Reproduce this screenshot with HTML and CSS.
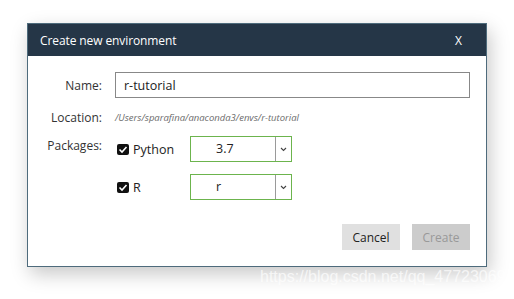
FILE: index.html
```html
<!DOCTYPE html>
<html lang="en">
<head>
    <meta charset="UTF-8">
    <title>Create new environment</title>
    <link rel="stylesheet" href="styles.css">
</head>
<body>
    <div class="dialog">
        <div class="dialog-header">
            <span class="dialog-title">Create new environment</span>
            <span class="dialog-close">X</span>
        </div>
        <form class="dialog-body">
            <div class="row row-name">
                <label class="label">Name:</label>
                <input type="text" class="text-input" value="r-tutorial">
            </div>
            <div class="row row-location">
                <span class="label">Location:</span>
                <span class="location">/Users/sparafina/anaconda3/envs/r-tutorial</span>
            </div>
            <div class="row row-package">
                <span class="label label-top">Packages:</span>
                <div class="package">
                    <span class="check">
                        <svg width="12" height="11" viewBox="0 0 12 11"><polyline points="2.5,5.5 5,8 9.5,3" fill="none" stroke="#fff" stroke-width="1.6"/></svg>
                    </span>
                    <span class="package-name">Python</span>
                    <div class="select">
                        <span class="select-value">3.7</span>
                        <span class="select-arrow">
                            <svg width="7" height="5" viewBox="0 0 7 5"><polyline points="1,1 3.5,3.5 6,1" fill="none" stroke="#444" stroke-width="1.1"/></svg>
                        </span>
                    </div>
                </div>
            </div>
            <div class="row row-package-r">
                <span class="label"></span>
                <div class="package">
                    <span class="check">
                        <svg width="12" height="11" viewBox="0 0 12 11"><polyline points="2.5,5.5 5,8 9.5,3" fill="none" stroke="#fff" stroke-width="1.6"/></svg>
                    </span>
                    <span class="package-name">R</span>
                    <div class="select">
                        <span class="select-value">r</span>
                        <span class="select-arrow">
                            <svg width="7" height="5" viewBox="0 0 7 5"><polyline points="1,1 3.5,3.5 6,1" fill="none" stroke="#444" stroke-width="1.1"/></svg>
                        </span>
                    </div>
                </div>
            </div>
            <div class="buttons">
                <button type="button" class="btn btn-cancel">Cancel</button>
                <button type="button" class="btn btn-create" disabled>Create</button>
            </div>
        </form>
    </div>
    <div class="watermark">https://blog.csdn.net/qq_47723069</div>
</body>
</html>
```

FILE: styles.css
```css
body {
    margin: 0;
    background-color: #fff;
    font-family: 'Open Sans', 'Noto Sans', sans-serif;
    color: #222;
    position: relative;
    height: 299px;
    overflow: hidden;
}

.dialog {
    box-sizing: border-box;
    width: 460px;
    height: 244px;
    margin: 23px 0 0 27px;
    border: 1px solid #4e6b7c;
    background-color: #fff;
    box-shadow: 3px 7px 18px rgba(0, 0, 0, 0.22);
    display: flex;
    flex-direction: column;
}

.dialog-header {
    height: 32px;
    background-color: #253647;
    color: #fff;
    display: flex;
    align-items: center;
    justify-content: space-between;
    padding: 0 24px 0 12px;
}

.dialog-title {
    font-size: 12px;
    letter-spacing: -0.1px;
}

.dialog-close {
    font-size: 12px;
}

.dialog-body {
    padding: 0 16px 16px 0;
    display: flex;
    flex-direction: column;
    flex: 1;
}

.row {
    display: grid;
    grid-template-columns: 74px 1fr;
    column-gap: 13px;
    align-items: center;
    height: 26px;
}

.row-name {
    margin-top: 16px;
}

.row-location {
    margin-top: 6px;
}

.row-package {
    margin-top: 6px;
}

.row-package-r {
    margin-top: 12px;
}

.label {
    text-align: right;
    font-size: 12px;
    color: #333;
}

.label-top {
    align-self: start;
    padding-top: 1px;
}

.text-input {
    box-sizing: border-box;
    height: 26px;
    width: 100%;
    border: 1px solid #888;
    padding: 0 8px;
    font-family: inherit;
    font-size: 12.5px;
    color: #222;
    outline: none;
}

.location {
    font-size: 9.5px;
    font-style: italic;
    color: #6b6b6b;
}

.package {
    display: flex;
    align-items: center;
    padding-left: 2px;
}

.check {
    width: 12px;
    height: 11px;
    border-radius: 2px;
    background-color: #111;
    display: flex;
}

.package-name {
    font-size: 12.5px;
    margin-left: 4px;
    width: 57px;
}

.select {
    box-sizing: border-box;
    width: 102px;
    height: 26px;
    border: 1px solid #6cb44d;
    display: flex;
}

.select-value {
    flex: 1;
    padding-left: 25px;
    font-size: 12.5px;
    line-height: 24px;
    border-right: 1px solid #9a9a9a;
}

.select-arrow {
    width: 15px;
    display: flex;
    align-items: center;
    justify-content: center;
}

.buttons {
    display: flex;
    justify-content: flex-end;
    gap: 12px;
    margin-top: 24px;
}

.btn {
    width: 58px;
    height: 26px;
    border: none;
    font-family: inherit;
    font-size: 12px;
    padding: 0;
}

.btn-cancel {
    background-color: #e0e0e0;
    color: #222;
}

.btn-create {
    background-color: #cccccc;
    color: #999;
}

.watermark {
    position: absolute;
    left: 260px;
    top: 268px;
    font-family: 'Liberation Sans', Arial, sans-serif;
    font-size: 16px;
    color: rgba(255, 255, 255, 0.7);
    white-space: nowrap;
}
```
